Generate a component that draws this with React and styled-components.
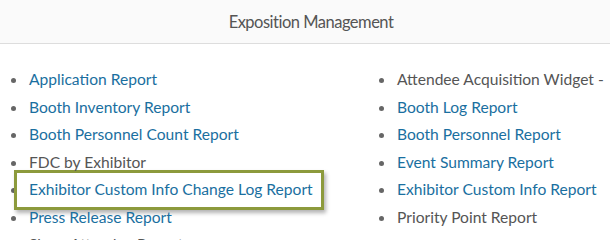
import styled, { createGlobalStyle } from 'styled-components';

const GlobalStyle = createGlobalStyle`
   body {
      margin: 0;
      background: #fff;
      font-family: Lato, "Open Sans", sans-serif;
   }
`;

const leftItems = [
   { label: 'Application Report', link: true },
   { label: 'Booth Inventory Report', link: true },
   { label: 'Booth Personnel Count Report', link: true },
   { label: 'FDC by Exhibitor', link: false },
   { label: 'Exhibitor Custom Info Change Log Report', link: true, marked: true },
   { label: 'Press Release Report', link: true },
   { label: 'Show Attendee Report', link: false },
];

const rightItems = [
   { label: 'Attendee Acquisition Widget -', link: false },
   { label: 'Booth Log Report', link: true },
   { label: 'Booth Personnel Report', link: true },
   { label: 'Event Summary Report', link: true },
   { label: 'Exhibitor Custom Info Report', link: true },
   { label: 'Priority Point Report', link: false },
];

const ReportList = ({ items }) => (
   <List>
      {items.map((item) => (
         <Item key={item.label}>
            {item.marked && <Marker />}
            <Label $link={item.link}>{item.label}</Label>
         </Item>
      ))}
   </List>
);

const App = () => {
   return (
      <Page>
         <GlobalStyle />
         <Header>
            <Title>Exposition Management</Title>
         </Header>
         <Columns>
            <ReportList items={leftItems} />
            <ReportList items={rightItems} />
         </Columns>
      </Page>
   );
};
export default App;

const Page = styled.div`
   width: 610px;
   height: 240px;
   overflow: hidden;
`;

const Header = styled.div`
   height: 44px;
   background: #fafafa;
   border-bottom: 1px solid #ddd;
   display: flex;
   align-items: center;
   justify-content: center;
   padding: 1px 0 0 12px;
   box-sizing: border-box;
`;

const Title = styled.h2`
   margin: 0;
   font-weight: 400;
   font-size: 16.5px;
   letter-spacing: -0.5px;
   color: #555;
`;

const Columns = styled.div`
   display: grid;
   grid-template-columns: 368px 1fr;
   padding-top: 22px;
`;

const List = styled.ul`
   list-style: none;
   margin: 0;
   padding: 0 0 0 29px;
`;

const Item = styled.li`
   position: relative;
   line-height: 27.5px;
   font-size: 15.6px;
   white-space: nowrap;

   &::before {
      content: '';
      position: absolute;
      left: -18px;
      top: 12px;
      width: 5px;
      height: 5px;
      border-radius: 50%;
      background: #666;
   }
`;

const Marker = styled.span`
   position: absolute;
   left: -15px;
   top: -6px;
   width: 304px;
   height: 34px;
   border: 3px solid #8c9a3c;
   background: #fff;
   box-shadow: 2px 3px 4px rgba(0, 0, 0, 0.3);
   z-index: 1;
`;

const Label = styled.a`
   position: relative;
   z-index: 2;
   color: ${(props) => (props.$link ? '#1a6fa0' : '#555')};
   text-decoration: none;
   cursor: ${(props) => (props.$link ? 'pointer' : 'default')};
`;
